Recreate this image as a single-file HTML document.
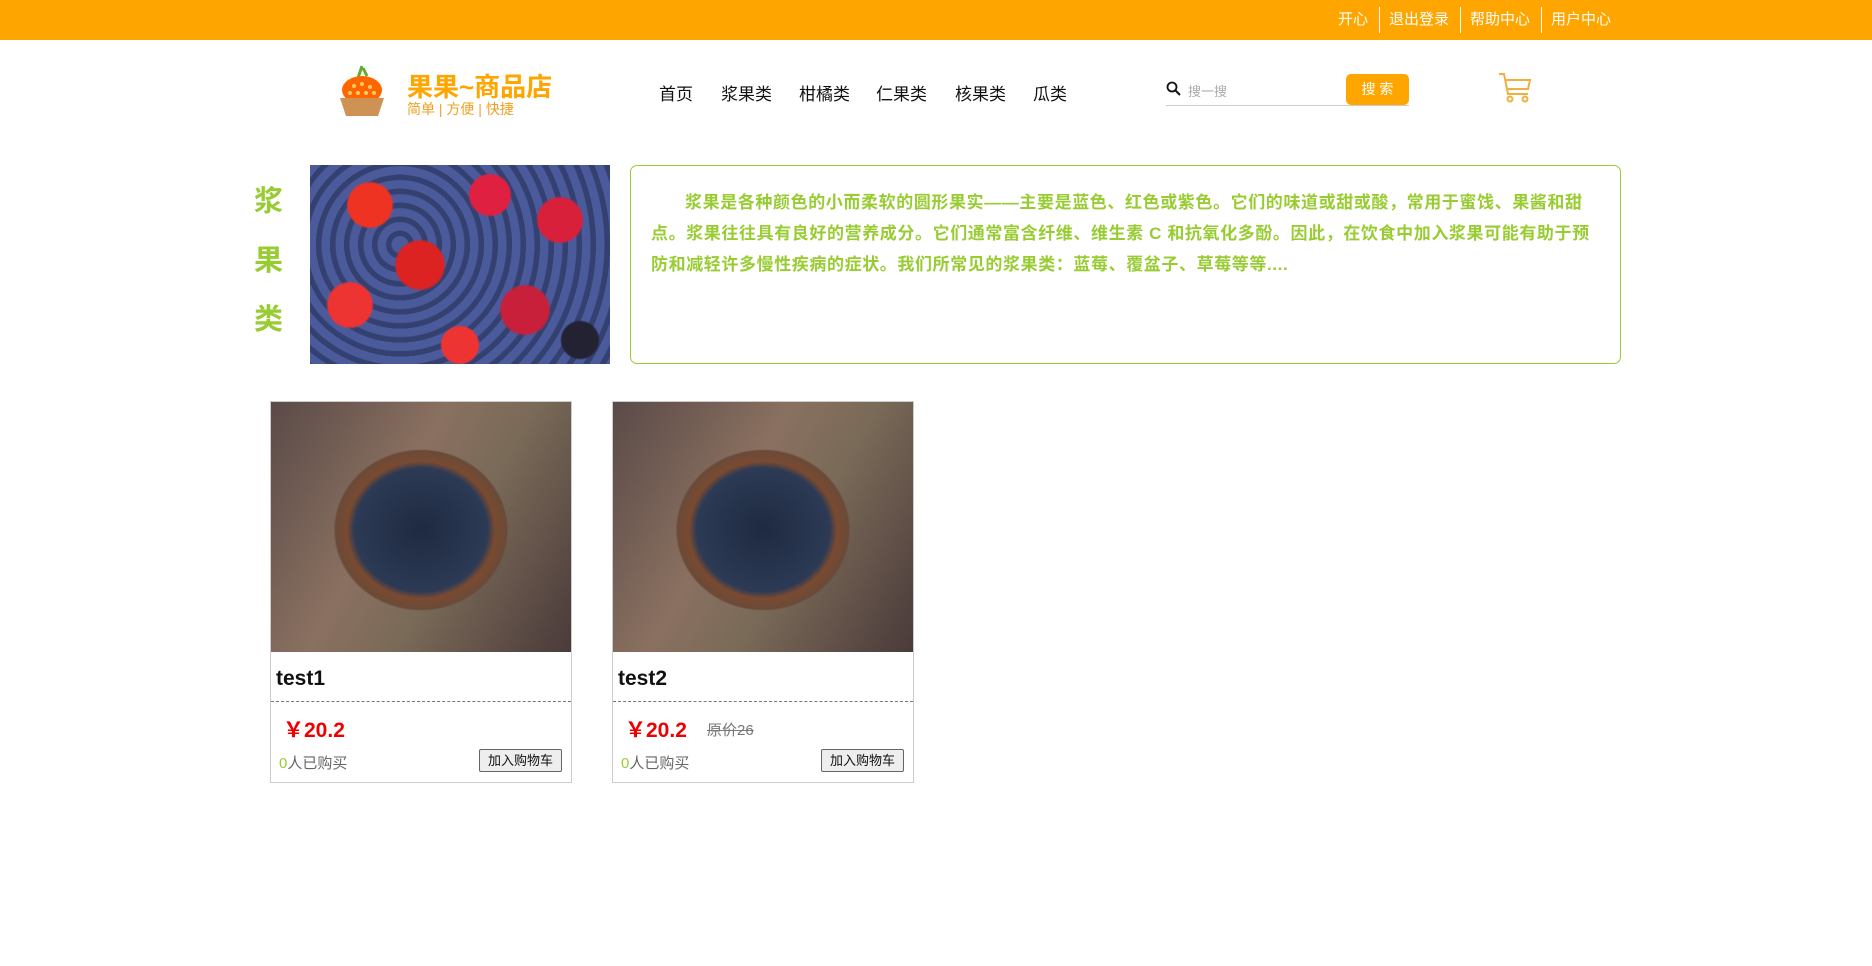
<!DOCTYPE html>
<html><head><meta charset="utf-8"><style>
*{margin:0;padding:0;box-sizing:border-box}
body{width:1872px;height:966px;background:#fff;font-family:"Liberation Sans","Noto Sans CJK SC",sans-serif;position:relative;overflow:hidden}
.a{position:absolute;white-space:nowrap}
.top{position:absolute;left:0;top:0;width:1872px;height:40px;background:#ffa500}
.tl{position:absolute;top:10px;color:#fff;font-size:15px;line-height:20px}
.sep{position:absolute;top:7px;width:1px;height:26px;background:#fff}
.nav{top:80px;font-size:17px;color:#111}
.card{position:absolute;top:401px;width:302px;height:382px;border:1px solid #ccc}
.card .img{height:250px;background:radial-gradient(ellipse 95px 88px at 150px 128px,#1e2a40 0,#2c3a55 70%,#7a4a30 78%,#6a4a38 90%,transparent 92%),linear-gradient(120deg,#5a4a48,#8a7060 40%,#7a6a58 60%,#4a3a3a)}
.card .t{position:absolute;left:5px;top:265px;font-size:21px;font-weight:bold;color:#111}
.card .ln{position:absolute;left:0;right:0;top:299px;border-top:1px dashed #777}
.card .p{position:absolute;left:12px;top:312px;font-size:21px;font-weight:bold;color:#e00}
.card .o{position:absolute;left:94px;top:317px;font-size:15px;color:#777;text-decoration:line-through}
.card .b{position:absolute;left:8px;top:350px;font-size:15px;color:#666}
.card .btn{position:absolute;left:208px;top:347px;width:83px;height:23px;border:1px solid #666;border-radius:2px;background:#eee;font-size:13px;text-align:center;line-height:21px;color:#111}
</style></head><body>
<div class="top"></div>
<div class="tl" style="left:1338px">开心</div><div class="sep" style="left:1379px"></div>
<div class="tl" style="left:1389px">退出登录</div><div class="sep" style="left:1460px"></div>
<div class="tl" style="left:1470px">帮助中心</div><div class="sep" style="left:1541px"></div>
<div class="tl" style="left:1551px">用户中心</div>

<svg class="a" style="left:336px;top:62px" width="52" height="56" viewBox="0 0 52 56">
<path d="M26 4 L22 16 M27 6 L31 14" stroke="#6a3" stroke-width="3"/>
<ellipse cx="26" cy="28" rx="20" ry="14" fill="#f60"/>
<g fill="#fc6"><circle cx="18" cy="24" r="2"/><circle cx="26" cy="22" r="2"/><circle cx="34" cy="25" r="2"/><circle cx="14" cy="31" r="2"/><circle cx="22" cy="31" r="2"/><circle cx="30" cy="31" r="2"/><circle cx="38" cy="31" r="2"/></g>
<path d="M4 36 H48 L42 54 H10 Z" fill="#cf9255"/>
</svg>
<div class="a" style="left:407px;top:67px;font-size:26px;font-weight:bold;color:#ffa500">果果~商品店</div>
<div class="a" style="left:407px;top:99px;font-size:14px;color:#f0a020">简单 | 方便 | 快捷</div>

<div class="a nav" style="left:659px">首页</div>
<div class="a nav" style="left:721px">浆果类</div>
<div class="a nav" style="left:799px">柑橘类</div>
<div class="a nav" style="left:876px">仁果类</div>
<div class="a nav" style="left:955px">核果类</div>
<div class="a nav" style="left:1033px">瓜类</div>

<svg class="a" style="left:1166px;top:81px" width="15" height="15" viewBox="0 0 15 15"><circle cx="6" cy="6" r="4.5" fill="none" stroke="#111" stroke-width="1.8"/><path d="M9.5 9.5 L14 14" stroke="#111" stroke-width="2"/></svg>
<div class="a" style="left:1188px;top:81px;font-size:13px;color:#aaa">搜一搜</div>
<div class="a" style="left:1166px;top:105px;width:243px;height:1px;background:#ccc"></div>
<div class="a" style="left:1346px;top:74px;width:63px;height:31px;background:#ffa500;border-radius:5px;color:#fff;font-size:14px;text-align:center;line-height:31px">搜 索</div>
<svg class="a" style="left:1498px;top:72px" width="34" height="32" viewBox="0 0 34 32" fill="none" stroke="#f0b040" stroke-width="2"><path d="M1 2 H6 L10 22 H30 M8 8 H32 L30 17 H10"/><circle cx="12" cy="27" r="2.5"/><circle cx="27" cy="27" r="2.5"/></svg>

<div class="a" style="left:254px;top:173px;font-size:29px;font-weight:bold;color:#9c3;line-height:59px;width:30px;white-space:normal">浆 果 类</div>
<div class="a" style="left:310px;top:165px;width:300px;height:199px;background:
radial-gradient(circle 24px at 60px 40px,#e32 90%,transparent),radial-gradient(circle 26px at 110px 100px,#d22 90%,transparent),radial-gradient(circle 24px at 40px 140px,#e33 90%,transparent),radial-gradient(circle 22px at 180px 30px,#e02040 90%,transparent),radial-gradient(circle 24px at 250px 55px,#d8203a 90%,transparent),radial-gradient(circle 26px at 215px 145px,#c8203a 90%,transparent),radial-gradient(circle 20px at 150px 180px,#e33 90%,transparent),radial-gradient(circle 20px at 270px 175px,#223 90%,transparent),
repeating-radial-gradient(circle at 30% 40%,#4a5a9a 0 8px,#334070 9px 14px);"></div>
<div class="a" style="left:630px;top:165px;width:991px;height:199px;border:1px solid #9c3;border-radius:7px"></div>
<div class="a" style="left:651px;top:187px;width:948px;white-space:normal;font-size:17px;letter-spacing:0.6px;line-height:31px;font-weight:bold;color:#9c3;text-indent:2em">浆果是各种颜色的小而柔软的圆形果实——主要是蓝色、红色或紫色。它们的味道或甜或酸，常用于蜜饯、果酱和甜点。浆果往往具有良好的营养成分。它们通常富含纤维、维生素 C 和抗氧化多酚。因此，在饮食中加入浆果可能有助于预防和减轻许多慢性疾病的症状。我们所常见的浆果类：蓝莓、覆盆子、草莓等等....</div>

<div class="card" style="left:270px"><div class="img"></div><div class="t">test1</div><div class="ln"></div><div class="p">￥20.2</div><div class="b"><span style="color:#9c3">0</span>人已购买</div><div class="btn">加入购物车</div></div>
<div class="card" style="left:612px"><div class="img"></div><div class="t">test2</div><div class="ln"></div><div class="p">￥20.2</div><div class="o">原价26</div><div class="b"><span style="color:#9c3">0</span>人已购买</div><div class="btn">加入购物车</div></div>
</body></html>
